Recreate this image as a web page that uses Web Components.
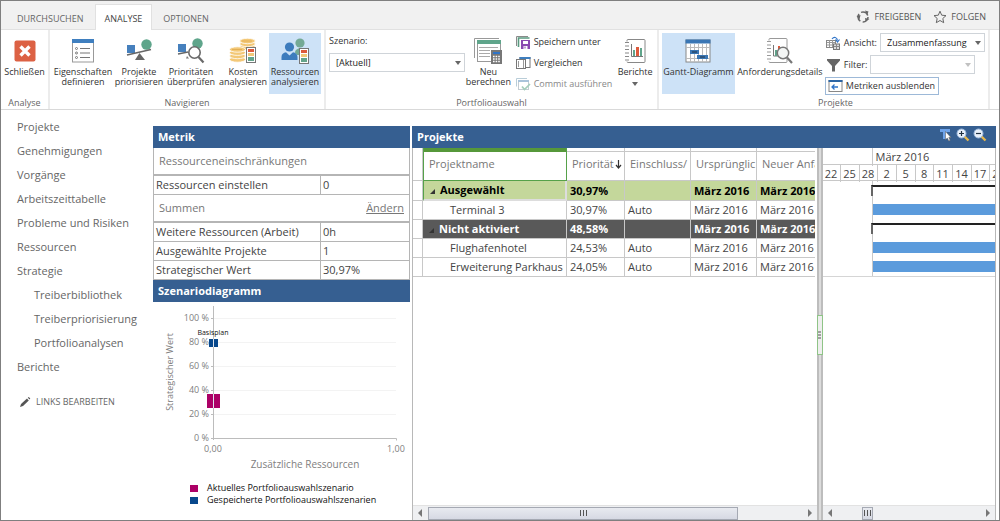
<!DOCTYPE html>
<html lang="de">
<head>
<meta charset="utf-8">
<title>Portfolioanalyse</title>
<style>
  body { margin: 0; font-family: "Open Sans", "Noto Sans", sans-serif; font-size: 11px; line-height: 18px; color: #444; background: #fff; }
</style>
</head>
<body>
<app-frame>
  <ribbon-tabs slot="tabs"></ribbon-tabs>
  <ribbon-bar slot="ribbon"></ribbon-bar>
  <side-nav slot="nav"></side-nav>
  <metric-panel slot="metrics"></metric-panel>
  <project-panel slot="projects"></project-panel>
</app-frame>

<script>
function define(name, css, html, setup) {
  const template = document.createElement('template');
  template.innerHTML = `<style>*, *::before { box-sizing: border-box; } ${css}</style>${html}`;
  customElements.define(name, class extends HTMLElement {
    constructor() {
      super();
      this.attachShadow({ mode: 'open' }).append(template.content.cloneNode(true));
    }
    connectedCallback() { if (setup) setup(this, this.shadowRoot); }
  });
}

const svg = (w, h, body) => `<svg width="${w}" height="${h}" viewBox="0 0 ${w} ${h}" aria-hidden="true">${body}</svg>`;

const strip = (x, y) => `<rect x="${x + .5}" y="${y + .5}" width="9" height="15" fill="#fff" stroke="#777"/>
  <path fill="#dd5a3c" d="M${x + 2} ${y + 2}h6v3h-6z"/><path fill="#f2c879" d="M${x + 2} ${y + 6}h6v3h-6z"/><path fill="#63a48b" d="M${x + 2} ${y + 10}h6v4h-6z"/>`;

const ICONS = {
  close: svg(22, 22, `<rect x=".5" y=".5" width="21" height="21" rx="2" fill="#dc6144"/><path d="M6.5 6.5l9 9M15.5 6.5l-9 9" stroke="#fff" stroke-width="3.4"/>`),
  properties: svg(24, 24, `<rect x="1.500" y="1" width="21" height="22" fill="#fff" stroke="#999"/><path fill="#3f7fbf" d="M1 0h22v4H1z"/>
    <g fill="none" stroke="#777"><circle cx="5.5" cy="9.5" r="1"/><circle cx="5.5" cy="14" r="1"/><circle cx="5.5" cy="18.5" r="1"/><path d="M9 9.5h10M9 14h10M9 18.5h10"/></g>`),
  prioritize: svg(26, 24, `<path fill="#4680bd" d="M1 6h8v8H1z"/><circle cx="20.5" cy="5.5" r="5.2" fill="#5fa58b"/><path d="M1 16l24-5.5" stroke="#666" stroke-width="1.4"/><path fill="#666" d="M13.5 14l5.5 7H9z"/>`),
  review: svg(28, 26, `<path fill="#4680bd" d="M1 6h8v8H1z"/><circle cx="20.5" cy="5.5" r="5.2" fill="#5fa58b"/><path d="M1 16l10-2" stroke="#666" stroke-width="1.3"/><path fill="#777" d="M10 18l2 2.5H9z"/><circle cx="17.5" cy="14.5" r="5.7" fill="#fff" stroke="#6a6a6a" stroke-width="1.6"/><path d="M21.5 19l5 5.5" stroke="#6a6a6a" stroke-width="2.2"/>`),
  costs: svg(28, 26, `<g fill="#f3c877" stroke="#fff" stroke-width=".8"><ellipse cx="18.5" cy="9" rx="7.8" ry="2.7"/><ellipse cx="18.5" cy="6" rx="7.8" ry="2.7"/><ellipse cx="18.5" cy="3" rx="7.8" ry="2.7"/>
    <ellipse cx="8.5" cy="21.5" rx="8" ry="2.7"/><ellipse cx="8.5" cy="18" rx="8" ry="2.7"/><ellipse cx="8.5" cy="14.7" rx="8" ry="2.7"/><ellipse cx="8.5" cy="11.5" rx="8" ry="2.7"/></g>
    <path d="M13 3h10M3 11.5h10" stroke="#e0a94d" stroke-width=".8"/>${strip(17, 9)}`),
  resources: svg(28, 26, `<circle cx="19" cy="5" r="4.6" fill="#74a995"/><path d="M14 15c0-6 10-6 11-1v3h-9z" fill="#74a995"/><circle cx="8.5" cy="9" r="4.6" fill="#3d7cbd"/><path d="M.5 22v-3c0-3 2-4.500 4.500-4.800l3.500 3.300 3.500-3.300c2.500.3 4.500 1.800 4.500 4.800v3z" fill="#3d7cbd"/>${strip(18, 10)}`),
  recalc: svg(30, 28, `<path d="M1.5 21V1.5H26" fill="none" stroke="#999"/><rect x="4.5" y="3.5" width="23" height="21" fill="#fff" stroke="#999"/><path fill="#5fa58b" d="M4 3h24v4H4z"/><path d="M6 10.5h19M6 13.5h11M6 16.5h11M6 19.5h11" stroke="#aaa"/>
    <rect x="18" y="13" width="11" height="14" fill="#777"/><path fill="#2f74c8" d="M20 15h7v2h-7z"/><path d="M20 19.5h7M20 22h7M20 24.5h7" stroke="#fff" stroke-width="1.3" stroke-dasharray="1.6 1"/>`),
  saveas: svg(16, 14, `<path d="M1.5 11V1.5H13" fill="none" stroke="#8a8a8a"/><path d="M3.5 12V3h11" fill="none" stroke="#5a9a80" stroke-width="1.6"/><path fill="#8a49b0" d="M6 5h9v9H6z"/><path fill="#fff" d="M8 6h5v3H8zM8.5 11h4v3h-4z"/><path fill="#8a49b0" d="M9.5 11.5h1v2h-1z"/>`),
  compare: svg(16, 14, `<rect x="5" y="1.5" width="10" height="10" fill="#fff" stroke="#777"/><path fill="#3f7fbf" d="M4.5 1h11v2h-11z"/><rect x="1.5" y="3.5" width="9" height="9" fill="#fff" stroke="#777"/><path d="M8.5 4v8M3.5 5v6" stroke="#999"/>`),
  commit: svg(16, 14, `<path d="M1.5 9.5v-8H12" fill="none" stroke="#b9cdd8"/><rect x="3.5" y="3.5" width="10" height="9" fill="#fff" stroke="#c3ccd2"/><path fill="#a9c3da" d="M3 3h11v2H3z"/><path d="M7 9.5l2.5 3L15 7" fill="none" stroke="#a4cdbb" stroke-width="1.7"/>`),
  reports: svg(22, 26, `<rect x="3" y="1.5" width="18" height="23" rx="1" fill="#fff" stroke="#888"/><path d="M3 3.5v20" stroke="#fff" stroke-width="3"/><path d="M1 4.5h4M1 8h4M1 11.5h4M1 15h4M1 18.5h4M1 22h4" stroke="#888"/><path d="M7.5 6v12.5H19" fill="none" stroke="#777"/><path fill="#dd5a3c" d="M12 9h3v9h-3z"/><path fill="#5fa58b" d="M9 12h2v6H9zM16 10h2v8h-2z"/>`),
  gantt: svg(26, 24, `<rect x="1" y="1" width="24" height="22" fill="#fff" stroke="#888"/><path fill="#3a76b4" d="M.5.5h25v4H.5z"/><path d="M5.5 5v18M9.5 5v18M13.5 5v18M17.5 5v18M21.5 5v18M1 8.5h24M1 19.5h24" stroke="#bbb"/><path fill="#3a76b4" d="M5 11h9v4H5zM12 16h11v4H12z"/><path d="M7 13h5M15 18h5" stroke="#234"/>`),
  demand: svg(28, 28, `<rect x="3" y="1.5" width="18" height="24" rx="1" fill="#fff" stroke="#999"/><path d="M3 3.5v21" stroke="#fff" stroke-width="3"/><path d="M1 4.5h4M1 8h4M1 11.5h4M1 15h4M1 18.5h4M1 22h4" stroke="#999"/><path d="M7.5 8v11H12" fill="none" stroke="#777"/><path fill="#5fa58b" d="M9 13h2v6H9z"/><path fill="#dd5a3c" d="M12 9h2v3h-2z"/><circle cx="17" cy="16" r="5.7" fill="#f3f5f4" stroke="#777" stroke-width="1.5"/><path d="M21 20.5l5 5.5" stroke="#777" stroke-width="2.2"/>`),
  view: svg(15, 14, `<rect x=".5" y="4.5" width="9" height="7" fill="#fff" stroke="#888"/><path d="M1 6.5h8M1 9h8M3.5 4v7M6.5 4v7" stroke="#999"/><path d="M6 3c2-2.5 5-2 5.5 1.5M9.5 3.5l2 2.5 2-2.5" fill="none" stroke="#2f74c8" stroke-width="1.2"/><rect x="7.5" y="8" width="6" height="5.5" fill="#ddd" stroke="#777"/><path d="M10.5 8v5.5M8 10.5h6" stroke="#888"/>`),
  filter: svg(15, 14, `<path fill="#666" d="M1 1h13v1.5L9 8v5.5H6V8L1 2.5z"/>`),
  hide: svg(15, 14, `<rect x="1" y="1.5" width="13" height="11" fill="#fff" stroke="#888"/><path fill="#2d66a5" d="M.5 1h14v2H.5z"/><path d="M10 8H4M6.5 5.5L4 8l2.5 2.5" fill="none" stroke="#2f74c8" stroke-width="1.3"/>`),
  share: svg(14, 14, `<circle cx="7" cy="7" r="5" fill="none" stroke="#666" stroke-width="1.5" stroke-dasharray="8 2.47"/><path fill="#666" d="M9 .5l3.5 1-1.5 4zM13.5 9L9.5 11.5 9 8zM.5 6l4-1-1 4.5z"/>`),
  star: svg(14, 14, `<path d="M7 1.2l1.700 4 4.300.4-3.200 2.900.9 4.200L7 10.500l-3.700 2.200.9-4.200L1 5.600l4.300-.4z" fill="none" stroke="#666"/>`),
  pencil: svg(12, 12, `<path fill="#555" d="M1 11l1-3 6-5.500L9.800 4.500 4 10zM8.800 1.800l1-.8 1.500 1.500-.8 1z"/>`),
  caret: svg(6, 4, `<path fill="#666" d="M0 0h6L3 4z"/>`),
  filterlist: svg(14, 14, `<path fill="#6ea3ea" d="M1 1h10v3H1zM4 4h4v7H4z"/><path fill="#fff" stroke="#666" stroke-width=".6" d="M6.5 3.5v8l1.8-1.5 1.5 3 1.4-.7-1.4-2.8h2.2z"/>`),
  zoomin: svg(14, 14, `<path d="M8.5 8.5l4 4" stroke="#e8b84c" stroke-width="2.4"/><circle cx="5.5" cy="5.5" r="4.5" fill="#e9f1fb" stroke="#9db9dc"/><path d="M5.5 3v5M3 5.5h5" stroke="#234" stroke-width="1.2"/>`),
  zoomout: svg(14, 14, `<path d="M8.5 8.5l4 4" stroke="#e8b84c" stroke-width="2.4"/><circle cx="5.5" cy="5.5" r="4.5" fill="#e9f1fb" stroke="#9db9dc"/><path d="M3 5.5h5" stroke="#234" stroke-width="1.2"/>`)
};

define('app-icon', `:host { display: inline-flex; } svg { display: block; }`, ``, (host, root) => {
  if (!root.querySelector('svg')) root.innerHTML += ICONS[host.getAttribute('name')];
});

define('app-frame', `
  :host { display: flex; flex-direction: column; min-height: 100vh; border: 1px solid #7f7f7f; box-sizing: border-box; }
  .work { flex: 1; display: grid; grid-template-columns: 152px 257px minmax(0, 1fr); padding: 0 3px 0 0; }
  .projects { display: flex; padding: 16px 0 0 2px; }
  .metrics { padding-top: 16px; }
  ::slotted(project-panel) { flex: 1; }`,
  `<slot name="tabs"></slot><slot name="ribbon"></slot>
  <main class="work"><slot name="nav"></slot><div class="metrics"><slot name="metrics"></slot></div><div class="projects"><slot name="projects"></slot></div></main>`);

define('ribbon-tabs', `
  :host { display: flex; height: 29px; background: #f1f1f1; border-bottom: 1px solid #e1e1e1; font-size: 9px; justify-content: space-between; box-sizing: border-box; }
  nav { display: flex; padding: 3px 0 0 5px; }
  a { color: #666; text-decoration: none; padding: 6px 11px 0; height: 26px; }
  a[aria-current] { background: #fff; border: 1px solid #e1e1e1; border-bottom: 0; padding: 5px 9px 0; color: #444; }
  .actions { display: flex; gap: 12px; padding-right: 13px; align-items: center; }
  button { all: unset; display: flex; align-items: center; gap: 4px; color: #555; padding-top: 4px; }`,
  `<nav><a href="#browse">DURCHSUCHEN</a><a href="#analyse" aria-current="page">ANALYSE</a><a href="#options">OPTIONEN</a></nav>
  <div class="actions"><button><app-icon name="share"></app-icon>FREIGEBEN</button><button><app-icon name="star"></app-icon>FOLGEN</button></div>`);

define('ribbon-group', `
  :host { display: flex; flex-direction: column; height: 79px; border-right: 2px solid #ececec; box-sizing: border-box; padding: 3px 3px 0; }
  .items { display: flex; height: 61px; }
  .label { color: #666; text-align: center; line-height: 12px; padding: 3px 0 0 var(--label-indent, 0); }`,
  `<div class="items"><slot></slot></div><div class="label"></div>`,
  (host, root) => { root.querySelector('.label').textContent = host.getAttribute('label'); });

define('ribbon-button', `
  :host { display: flex; }
  button { font: inherit; border: 0; background: none; padding: 4px 0 0; margin: 0; width: 100%; display: flex; flex-direction: column; align-items: center; color: #333; line-height: 10px; white-space: nowrap; }
  :host([active]) button { background: #cde2f7; }
  .icon { height: 28px; display: flex; align-items: center; margin-bottom: 2px; }
  .more { margin-top: 5px; }`,
  `<button><span class="icon"><slot name="icon"></slot></span><slot></slot><app-icon class="more" name="caret"></app-icon></button>`,
  (host, root) => { root.querySelector('.more').hidden = !host.hasAttribute('menu'); if (!host.hasAttribute('menu')) root.querySelector('.more').remove(); });

define('ribbon-command', `
  :host { display: flex; }
  button { font: inherit; border: 1px solid transparent; background: none; margin: 0; padding: 0 3px 0 2px; height: 18px; display: flex; align-items: center; gap: 3px; color: #333; line-height: 14px; white-space: nowrap; }
  :host([framed]) button { border-color: #9db9d8; }
  button:disabled { color: #888; }`,
  `<button><slot name="icon"></slot><slot></slot></button>`,
  (host, root) => { root.querySelector('button').disabled = host.hasAttribute('disabled'); });

define('ribbon-select', `
  :host { display: flex; align-items: center; gap: 3px; color: #333; line-height: 14px; padding-left: 1px; }
  :host([stacked]) { flex-direction: column; align-items: flex-start; gap: 5px; padding-left: 0; }
  label { display: flex; align-items: center; gap: 3px; }
  .box { display: flex; position: relative; width: var(--field-width, 105px); }
  select { appearance: none; font: inherit; color: #222; width: 100%; height: 19px; padding: 0 6px; border: 1px solid #cfd4d9; border-radius: 0; background: #fff; margin: 0; opacity: 1; }
  .box app-icon { position: absolute; right: 4px; top: 8px; pointer-events: none; }
  select:disabled + app-icon { opacity: .4; }`,
  `<label for="field"><slot name="icon"></slot><slot></slot></label><span class="box"><select id="field"></select><app-icon name="caret"></app-icon></span>`,
  (host, root) => {
    const select = root.querySelector('select');
    select.replaceChildren(new Option(host.getAttribute('value') || ''));
    select.disabled = host.hasAttribute('disabled');
  });

define('ribbon-bar', `
  :host { display: flex; font-size: 9px; border-bottom: 1px solid #d9d9d9; }
  .first { width: 49px; } .first ribbon-button { flex: 1; }
  ribbon-button { width: 52px; } .wide { width: 60px; }
  .reports { width: 42px; } .gantt { width: 73px; } .demand { width: 90px; }
  .scenario { --field-width: 136px; margin: 1px 0 0; align-self: flex-start; }
  .col { display: flex; flex-direction: column; gap: 3px; flex: 1; }
  .portfolio { width: 333px; }
  .projects { width: 331px; --label-indent: 24px; }`,
  `<ribbon-group class="first" label="Analyse"><ribbon-button><app-icon slot="icon" name="close"></app-icon>Schließen</ribbon-button></ribbon-group>
  <ribbon-group label="Navigieren">
    <ribbon-button class="wide"><app-icon slot="icon" name="properties"></app-icon>Eigenschaften<br>definieren</ribbon-button>
    <ribbon-button><app-icon slot="icon" name="prioritize"></app-icon>Projekte<br>priorisieren</ribbon-button>
    <ribbon-button><app-icon slot="icon" name="review"></app-icon>Prioritäten<br>überprüfen</ribbon-button>
    <ribbon-button><app-icon slot="icon" name="costs"></app-icon>Kosten<br>analysieren</ribbon-button>
    <ribbon-button active><app-icon slot="icon" name="resources"></app-icon>Ressourcen<br>analysieren</ribbon-button>
  </ribbon-group>
  <ribbon-group class="portfolio" label="Portfolioauswahl">
    <ribbon-select class="scenario" stacked value="[Aktuell]">Szenario:</ribbon-select>
    <ribbon-button><app-icon slot="icon" name="recalc"></app-icon>Neu<br>berechnen</ribbon-button>
    <div class="col">
      <ribbon-command><app-icon slot="icon" name="saveas"></app-icon>Speichern unter</ribbon-command>
      <ribbon-command><app-icon slot="icon" name="compare"></app-icon>Vergleichen</ribbon-command>
      <ribbon-command disabled><app-icon slot="icon" name="commit"></app-icon>Commit ausführen</ribbon-command>
    </div>
    <ribbon-button class="reports" menu><app-icon slot="icon" name="reports"></app-icon>Berichte</ribbon-button>
  </ribbon-group>
  <ribbon-group class="projects" label="Projekte">
    <ribbon-button class="gantt" active><app-icon slot="icon" name="gantt"></app-icon>Gantt-Diagramm</ribbon-button>
    <ribbon-button class="demand"><app-icon slot="icon" name="demand"></app-icon>Anforderungsdetails</ribbon-button>
    <div class="col">
      <ribbon-select value="Zusammenfassung"><app-icon slot="icon" name="view"></app-icon>Ansicht:</ribbon-select>
      <ribbon-select disabled><app-icon slot="icon" name="filter"></app-icon>Filter:</ribbon-select>
      <ribbon-command framed><app-icon slot="icon" name="hide"></app-icon>Metriken ausblenden</ribbon-command>
    </div>
  </ribbon-group>`);

define('side-nav', `
  :host { display: block; padding: 5px 0 0 16px; }
  ul { list-style: none; margin: 0; padding: 0; }
  ul ul { padding-left: 17px; }
  a { color: #666; text-decoration: none; line-height: 24px; white-space: nowrap; }
  li { line-height: 24px; }
  .edit { display: flex; align-items: center; gap: 5px; font-size: 9px; padding: 11px 0 0 2px; }`,
  `<nav><ul><li><a href="#p">Projekte</a></li><li><a href="#g">Genehmigungen</a></li><li><a href="#v">Vorgänge</a></li><li><a href="#a">Arbeitszeittabelle</a></li>
  <li><a href="#r">Probleme und Risiken</a></li><li><a href="#re">Ressourcen</a></li>
  <li><a href="#s">Strategie</a><ul><li><a href="#tb">Treiberbibliothek</a></li><li><a href="#tp">Treiberpriorisierung</a></li><li><a href="#pa">Portfolioanalysen</a></li></ul></li>
  <li><a href="#b">Berichte</a></li></ul></nav><a class="edit" href="#edit"><app-icon name="pencil"></app-icon>LINKS BEARBEITEN</a>`);

define('panel-title', `
  :host { display: flex; justify-content: space-between; background: #365f91; color: #fff; font-weight: 700; height: 22px; line-height: 22px; padding: 0 9px 0 5px; box-sizing: border-box; }
  h2 { margin: 0; font: inherit; }`,
  `<h2><slot></slot></h2><slot name="tools"></slot>`);

define('metric-panel', `
  :host { display: block; }
  table { width: 100%; border-spacing: 0; border: solid #b5b5b5; border-width: 0 1px; table-layout: fixed; }
  th { font-weight: 400; text-align: left; height: 28px; color: #777; padding: 0 5px; border-bottom: 2px solid #b5b5b5; }
  th > div { display: flex; justify-content: space-between; }
  a { color: #777; }
  td { height: 19px; padding: 0 2px; border-bottom: 1px solid #b5b5b5; white-space: nowrap; }
  td:first-child { border-right: 1px solid #b5b5b5; }`,
  `<panel-title>Metrik</panel-title>
  <table><colgroup><col style="width:167px"><col></colgroup>
  <tr><th colspan="2">Ressourceneinschränkungen</th></tr>
  <tr><td>Ressourcen einstellen</td><td>0</td></tr>
  <tr><th colspan="2"><div>Summen <a href="#change">Ändern</a></div></th></tr>
  <tr><td>Weitere Ressourcen (Arbeit)</td><td>0h</td></tr>
  <tr><td>Ausgewählte Projekte</td><td>1</td></tr>
  <tr><td>Strategischer Wert</td><td>30,97%</td></tr></table>
  <panel-title>Szenariodiagramm</panel-title><scenario-chart></scenario-chart>`);

define('scenario-chart', `
  :host { display: block; font-size: 9px; }
  svg { display: block; width: 100%; }
  text { fill: #808080; }
  .axis { font-size: 10px; } .point { font-size: 7px; fill: #111; }
  ul { list-style: none; margin: 8px 0 0; padding: 0 0 0 37px; color: #111; line-height: 12px; }
  li { display: flex; align-items: center; gap: 9px; white-space: nowrap; }
  li::before { content: ""; width: 8px; height: 7px; background: var(--series); }`,
  `<svg viewBox="0 2 257 172">
    <path d="M61 18.5H243M61 42.5H243M61 66.5H243M61 90.5H243M61 114.5H243" stroke="#f3f3f3"/>
    <path d="M60.5 6v134M58 138.5h185.5v2M58 18.5h3M58 42.5h3M58 66.5h3M58 90.5h3M58 114.5h3" fill="none" stroke="#bcbcbc"/>
    <g text-anchor="end"><text x="56" y="21">100 %</text><text x="56" y="45">80 %</text><text x="56" y="69">60 %</text><text x="56" y="93">40 %</text><text x="56" y="117">20 %</text><text x="56" y="141">0 %</text></g>
    <g text-anchor="middle"><text x="60" y="152">0,00</text><text x="243" y="152">1,00</text>
    <text class="axis" x="152" y="168">Zusätzliche Ressourcen</text><text transform="translate(20 72) rotate(-90)">Strategischer Wert</text></g>
    <path fill="#08488c" d="M56 39h9v8h-9z"/><path fill="#ac0066" d="M54 94h13v14H54z"/><path d="M60.5 39v8M60.5 94v14" stroke="#dfe3ec"/>
    <text class="point" x="60" y="35" text-anchor="middle">Basisplan</text></svg>
  <ul><li style="--series:#ac0066">Aktuelles Portfolioauswahlszenario</li><li style="--series:#08488c">Gespeicherte Portfolioauswahlszenarien</li></ul>`);

define('project-table', `
  :host { display: block; overflow: hidden; }
  table { width: 100%; table-layout: fixed; border-spacing: 0; }
  th, td { padding: 0 0 0 3px; border: solid #c8c8c8; border-width: 0 1px 1px 0; text-align: left; white-space: nowrap; overflow: hidden; line-height: 18px; height: 19px; }
  th:last-child, td:last-child { border-right: 0; }
  th { font-weight: 400; color: #777; height: 33px; padding: 0; vertical-align: top; }
  th::before { content: ""; display: block; height: 4px; border-bottom: 1px solid #c8c8c8; margin-bottom: 3px; }
  th span { display: flex; align-items: center; gap: 1px; padding-left: 5px; overflow: hidden; }
  th:first-child::before { border: 0; }
  th:nth-child(2) { border-color: #56a14a; border-left: 1px solid #56a14a; }
  th:nth-child(2)::before { background: #56983a; border-color: #56983a; }
  td:nth-child(2) { padding-left: 27px; }
  .sum td { font-weight: 700; }
  .sum td:nth-child(2) { padding-left: 6px; }
  .sum svg { margin-right: 5px; }
  .on td:not(:first-child) { background: #c4d79b; color: #000; }
  .on td:nth-child(2) { border-left: 1px solid #56a14a; border-right: 2px solid #ddd; border-bottom: 2px solid #ddd; }
  .off td:not(:first-child) { background: #595959; color: #fff; }`,
  `<table><colgroup><col style="width:10px"><col style="width:144px"><col style="width:58px"><col style="width:66px"><col style="width:66px"><col></colgroup>
  <thead><tr><th></th><th><span>Projektname</span></th><th><span>Priorität<svg width="7" height="9" viewBox="0 0 7 9"><path d="M3.5 0v7.5M1 5l2.5 3L6 5" fill="none" stroke="#333" stroke-width="1.2"/></svg></span></th><th><span>Einschluss/</span></th><th><span>Ursprünglic</span></th><th><span>Neuer Anfa</span></th></tr></thead><tbody></tbody></table>`,
  (host, root) => {
    const mark = `<svg width="5" height="5" viewBox="0 0 5 5"><path d="M5 0v5H0z" fill="#333"/></svg>`;
    const rows = [['on', 'Ausgewählt', '30,97%', ''], ['', 'Terminal 3', '30,97%', 'Auto'], ['off', 'Nicht aktiviert', '48,58%', ''], ['', 'Flughafenhotel', '24,53%', 'Auto'], ['', 'Erweiterung Parkhaus', '24,05%', 'Auto']];
    root.querySelector('tbody').innerHTML = rows.map(([kind, name, share, mode]) =>
      `<tr class="${kind ? 'sum ' + kind : ''}"><td></td><td>${kind ? mark : ''}${name}</td><td>${share}</td><td>${mode}</td><td>März 2016</td><td>März 2016</td></tr>`).join('');
  });

define('gantt-chart', `
  :host { display: block; overflow: hidden; }
  .months { display: grid; grid-template-columns: 49px 1fr; height: 17px; border-bottom: 1px solid #c8c8c8; line-height: 18px; }
  .months span + span { border-left: 1px solid #c8c8c8; padding-left: 3px; }
  .days { display: grid; grid-template-columns: 18px repeat(3, 19px 18px 19px); grid-auto-flow: column; height: 16px; border-bottom: 1px solid #c8c8c8; line-height: 17px; }
  .days span { border-right: 1px solid #c8c8c8; display: flex; justify-content: center; }
  .rows { margin-left: 49px; border: solid #c8c8c8; border-width: 0 0 0 1px; }
  .rows div { height: 19px; display: flex; padding-top: 4px; }
  .rows i { flex: 1; height: 11px; background: #5b9bdc; }
  .rows .sum i { background: none; border: solid #222; border-width: 2px 0 0 2px; border-left-color: #666; margin-left: -2px; }
  .end { border-bottom: 1px solid #d5d5d5; }`,
  `<div class="months"><span></span><span>März 2016</span></div>
  <div class="days"><span>22</span><span>25</span><span>28</span><span>2</span><span>5</span><span>8</span><span>11</span><span>14</span><span>17</span><span>20</span></div>
  <div class="end"><div class="rows"><div class="sum"><i></i></div><div><i></i></div><div class="sum"><i></i></div><div><i></i></div><div><i></i></div></div></div>`);

define('scroll-bar', `
  :host { display: flex; align-items: center; height: 15px; background: #eff0f2; border-top: 1px solid #e2e2e2; padding: 0 4px; box-sizing: border-box; }
  .track { flex: 1; display: flex; padding: 0 6px; }
  .thumb { height: 13px; border: 1px solid #a5a9b3; background: linear-gradient(#e8eaf0, #d6d9e3); margin-left: var(--start, 0); width: var(--size); display: flex; align-items: center; justify-content: center; }`,
  `<svg width="5" height="8" viewBox="0 0 5 8"><path d="M5 0v8L1 4z" fill="#777"/></svg><div class="track"><div class="thumb"><svg width="7" height="6" viewBox="0 0 7 6"><path d="M.5 0v6M3.5 0v6M6.5 0v6" stroke="#555"/></svg></div></div><svg width="5" height="8" viewBox="0 0 5 8"><path d="M0 0v8l4-4z" fill="#777"/></svg>`);

define('project-panel', `
  :host { display: flex; flex-direction: column; }
  .tools { display: flex; gap: 3px; padding-top: 2px; }
  button { all: unset; display: flex; height: 14px; }
  .body { flex: 1; display: grid; grid-template-columns: minmax(0, 405fr) 6px minmax(0, 173fr); border: solid #b8b8b8; border-width: 0 1px; }
  .pane { display: flex; flex-direction: column; justify-content: space-between; }
  project-table { margin-right: 2px; }
  .split { background: #dcdcdc; border: solid #bdbdbd; border-width: 0 2px; display: flex; flex-direction: column; padding-top: 167px; }
  .grip { height: 40px; margin: 0 -2px; border: 1px solid #8fc487; background: #eee; display: flex; align-items: center; justify-content: center; }
  .left scroll-bar { --size: 83%; }
  .right scroll-bar { --start: 17%; --size: 11px; }`,
  `<panel-title>Projekte<div class="tools" slot="tools"><button aria-label="Filter"><app-icon name="filterlist"></app-icon></button><button aria-label="Vergrößern"><app-icon name="zoomin"></app-icon></button><button aria-label="Verkleinern"><app-icon name="zoomout"></app-icon></button></div></panel-title>
  <div class="body"><div class="pane left"><project-table></project-table><scroll-bar></scroll-bar></div>
  <div class="split"><div class="grip"><svg width="3" height="8" viewBox="0 0 3 8"><path d="M0 1h3M0 4h3M0 7h3" stroke="#555"/></svg></div></div>
  <div class="pane right"><gantt-chart></gantt-chart><scroll-bar></scroll-bar></div></div>`);
</script>
</body>
</html>
